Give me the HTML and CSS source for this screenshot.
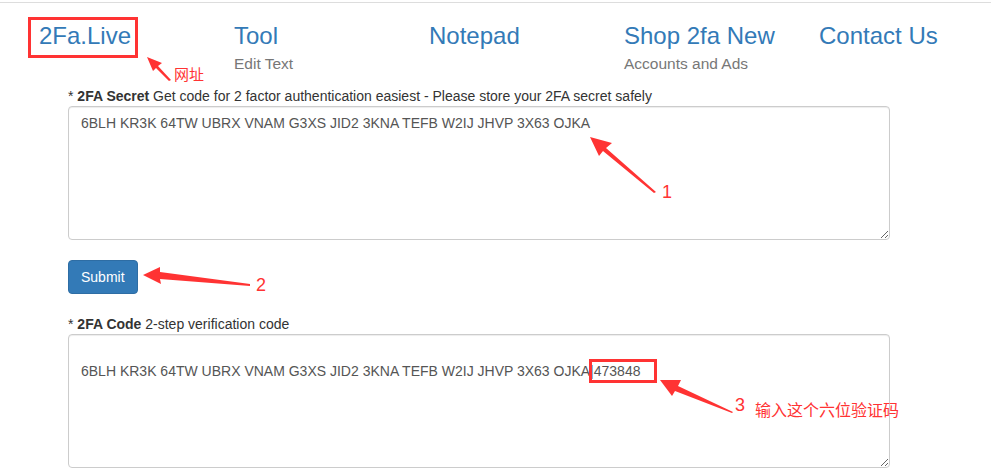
FILE: index.html
```html
<!DOCTYPE html>
<html lang="en">
<head>
    <meta charset="UTF-8">
    <title>2Fa.Live</title>
    <link rel="stylesheet" href="styles.css">
</head>
<body>
    <div class="topline"></div>
    <nav class="nav">
        <div class="nav-item"><a href="#">2Fa.Live</a></div>
        <div class="nav-item"><a href="#">Tool</a><span>Edit Text</span></div>
        <div class="nav-item"><a href="#">Notepad</a></div>
        <div class="nav-item"><a href="#">Shop 2fa New</a><span>Accounts and Ads</span></div>
        <div class="nav-item"><a href="#">Contact Us</a></div>
    </nav>

    <form class="form">
        <label for="secret">* <b>2FA Secret</b> Get code for 2 factor authentication easiest - Please store your 2FA secret safely</label>
        <textarea id="secret" class="box">6BLH KR3K 64TW UBRX VNAM G3XS JID2 3KNA TEFB W2IJ JHVP 3X63 OJKA</textarea>

        <button type="button" class="btn">Submit</button>

        <label for="code">* <b>2FA Code</b> 2-step verification code</label>
        <textarea id="code" class="box">

6BLH KR3K 64TW UBRX VNAM G3XS JID2 3KNA TEFB W2IJ JHVP 3X63 OJKA|473848</textarea>
    </form>

    <!-- screenshot annotations -->
    <div class="mark mark-logo"></div>
    <div class="mark mark-code"></div>
    <svg class="arrows" width="991" height="470" viewBox="0 0 991 470">
        <g fill="#f33">
            <path d="M147 57 L162 63 L158 66 L171 80 L169 81 L156 68 L153 71 Z"/>
            <path d="M590 137 L612 143 L606 148 L656 192 L654 193 L603 151 L599 156 Z"/>
            <path d="M143 275 L160 267 L160 272 L250 284 L250 286 L160 279 L161 284 Z"/>
            <path d="M660 380 L681 380 L678 386 L733 412 L732 413 L675 391 L672 396 Z"/>
        </g>
        <g fill="#f33" font-family="Liberation Sans, sans-serif" font-size="18">
            <text x="662" y="198">1</text>
            <text x="256" y="291">2</text>
            <text x="735" y="411">3</text>
        </g>
    </svg>
    <span class="note note-site">网址</span>
    <span class="note note-code">输入这个六位验证码</span>
</body>
</html>
```

FILE: styles.css
```css
body { margin: 0; font-family: "Liberation Sans", Arial, sans-serif; font-size: 14px; color: #333; position: relative; }
.topline { height: 2px; border-bottom: 1px solid #ddd; }
.nav { display: grid; grid-template-columns: repeat(5, 195px); padding: 0 0 0 24px; height: 83px; }
.nav-item { padding: 18px 15px 0; display: flex; flex-direction: column; }
.nav-item a { font-size: 24px; line-height: 30px; color: #337ab7; text-decoration: none; }
.nav-item span { font-size: 15.5px; line-height: 20px; margin-top: 3px; color: #777; }
.form { margin-left: 68px; width: 822px; display: flex; flex-direction: column; align-items: flex-start; }
.form label { line-height: 20px; }
.box { box-sizing: border-box; width: 822px; height: 134px; padding: 6px 12px; border: 1px solid #ccc; border-radius: 4px; font: 14px/20px "Liberation Sans", Arial, sans-serif; color: #555; box-shadow: inset 0 1px 1px rgba(0,0,0,.075); }
.btn { margin: 20px 0 20px; height: 34px; padding: 6px 12px; background: #337ab7; border: 1px solid #2e6da4; border-radius: 4px; color: #fff; font: 14px "Liberation Sans", Arial, sans-serif; }
.mark { position: absolute; border: 3px solid #f33; }
.mark-logo { left: 28px; top: 17px; width: 104px; height: 35px; }
.mark-code { left: 589px; top: 359px; width: 62px; height: 18px; }
.arrows { position: absolute; left: 0; top: 0; pointer-events: none; }
.note { position: absolute; color: #f33; font-family: "Noto Sans CJK SC", sans-serif; }
.note-site { left: 174px; top: 64px; font-size: 15px; line-height: 20px; }
.note-code { left: 755px; top: 398px; font-size: 16px; line-height: 22px; }
```
